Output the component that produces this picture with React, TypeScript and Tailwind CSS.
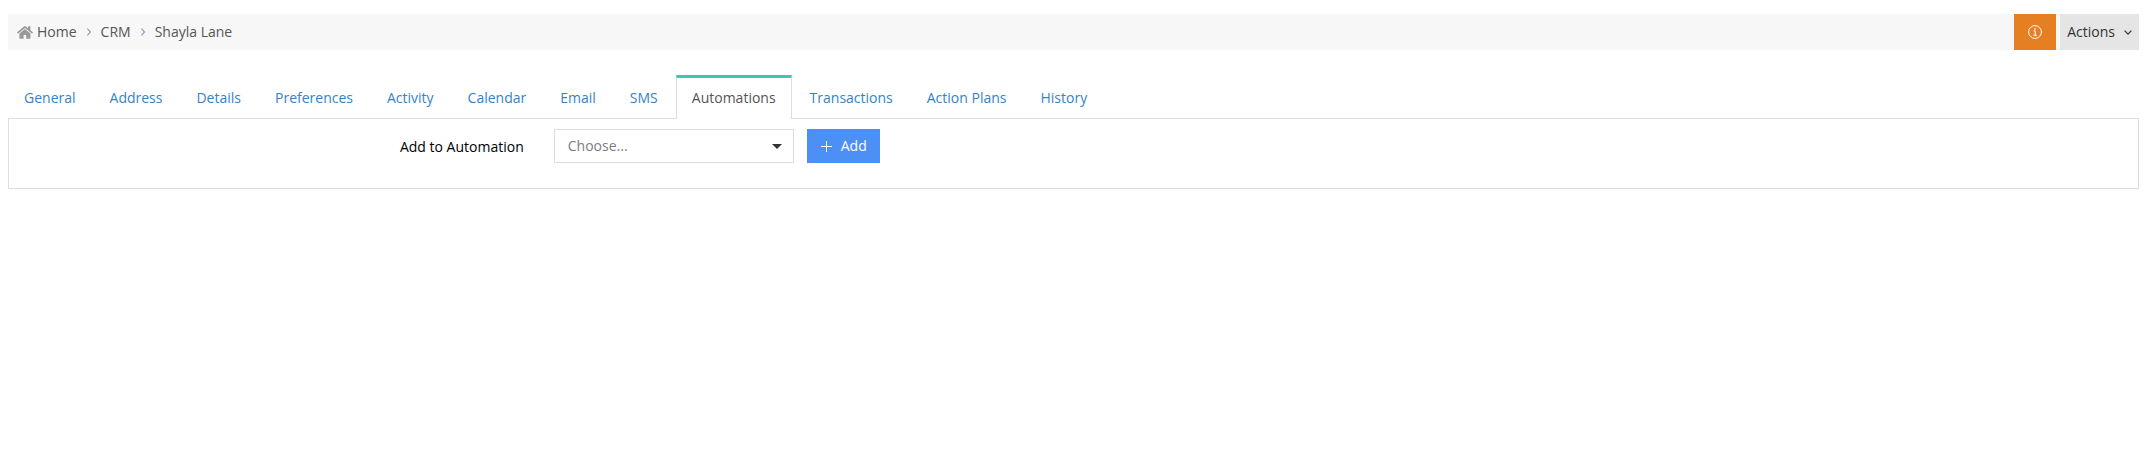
import { useState } from 'react';

const TABS = [
  'General',
  'Address',
  'Details',
  'Preferences',
  'Activity',
  'Calendar',
  'Email',
  'SMS',
  'Automations',
  'Transactions',
  'Action Plans',
  'History',
];

function HomeIcon() {
  return (
    <svg className="w-4 h-[13px] text-[#999999]" viewBox="0 0 16 13" fill="currentColor" aria-hidden="true">
      <path d="M8 2.9 2.4 7.5V12c0 .4.3.7.7.7h3.5V9.1h2.6v3.6h3.5c.4 0 .7-.3.7-.7V7.5z" />
      <path d="M15.8 6.3 13.4 4.3V.6c0-.2-.1-.3-.3-.3h-1.7c-.2 0-.3.1-.3.3v1.8L9 .6c-.6-.5-1.4-.5-2 0L.2 6.3c-.2.1-.2.3 0 .4l.5.7c.1.1.3.2.5 0L8 1.9l6.8 5.5c.2.2.4.1.5 0l.5-.7c.2-.1.2-.3 0-.4z" />
    </svg>
  );
}

function Separator() {
  return (
    <svg className="w-1 h-2 text-[#999999]" viewBox="0 0 4 8" fill="none" stroke="currentColor" strokeWidth="1.1" aria-hidden="true">
      <path d="M.3.6 3.5 4 .3 7.4" />
    </svg>
  );
}

function InfoIcon() {
  return (
    <svg className="w-3.5 h-3.5" viewBox="0 0 14 14" fill="none" stroke="currentColor" aria-hidden="true">
      <circle cx="7" cy="7" r="6.4" />
      <path d="M5.4 5.9h1.8v4.2M5.3 10.2h3.6" />
      <circle cx="7" cy="3.9" r=".8" fill="currentColor" stroke="none" />
    </svg>
  );
}

function Breadcrumb() {
  return (
    <div className="flex justify-between bg-[#f7f7f7] h-9">
      <nav aria-label="Breadcrumb" className="flex items-center pl-[9px] text-[#555555]">
        <a href="#home" className="flex items-center gap-1">
          <HomeIcon />
          Home
        </a>
        <span className="px-[10px]"><Separator /></span>
        <a href="#crm">CRM</a>
        <span className="px-[10px]"><Separator /></span>
        <a href="#contact">Shayla Lane</a>
      </nav>
      <div className="flex gap-1">
        <button type="button" aria-label="Info" className="flex items-center justify-center w-[42px] bg-[#e67e22] text-white">
          <InfoIcon />
        </button>
        <button type="button" className="flex items-center gap-[9px] px-[7px] bg-[#e5e5e5] text-[#333333]">
          Actions
          <svg className="w-2 h-[5px]" viewBox="0 0 8 5" fill="none" stroke="currentColor" strokeWidth="1.2" aria-hidden="true">
            <path d="M.6.7 4 4.1 7.4.7" />
          </svg>
        </button>
      </div>
    </div>
  );
}

export default function App() {
  const [active, setActive] = useState('Automations');

  return (
    <div className="px-2 pt-3.5 bg-white text-sm font-['Open_Sans',sans-serif]">
      <Breadcrumb />

      <div role="tablist" className="flex gap-0.5 mt-[25px]">
        {TABS.map((tab) => (
          <button
            key={tab}
            type="button"
            role="tab"
            aria-selected={tab === active}
            onClick={() => setActive(tab)}
            className={`h-11 -mb-px px-[15px] pb-0.5 border-x border-t-[3px] ${
              tab === active
                ? 'relative bg-white text-[#555555] border-x-[#dddddd] border-t-[#3cc8b0]'
                : 'border-transparent text-[#3583c6]'
            }`}
          >
            {tab}
          </button>
        ))}
      </div>

      <div role="tabpanel" className="border border-[#dddddd] px-[10px] pt-[10px] pb-[25px]">
        <form className="flex -mx-[15px]" onSubmit={(e) => e.preventDefault()}>
          <label htmlFor="automation" className="w-1/4 px-[15px] pt-2 text-right text-black">
            Add to Automation
          </label>
          <div className="flex gap-[13px] px-[15px]">
            <div className="relative">
              <select
                id="automation"
                defaultValue=""
                className="appearance-none w-60 h-[34px] px-[13px] border border-[#dddddd] bg-white text-[#7d7d7d]"
              >
                <option value="">Choose...</option>
              </select>
              <svg
                className="absolute right-3 top-[15px] w-[10px] h-[5px] text-[#333333] pointer-events-none"
                viewBox="0 0 10 5"
                fill="currentColor"
                aria-hidden="true"
              >
                <path d="M0 0h10L5 5z" />
              </svg>
            </div>
            <button type="submit" className="flex items-center gap-[9px] h-[34px] pl-3.5 pr-[13px] bg-[#4d90f5] text-white font-medium">
              <svg className="w-[11px] h-[11px]" viewBox="0 0 11 11" fill="none" stroke="currentColor" aria-hidden="true">
                <path d="M5.5 0v11M0 5.5h11" />
              </svg>
              Add
            </button>
          </div>
        </form>
      </div>
    </div>
  );
}
